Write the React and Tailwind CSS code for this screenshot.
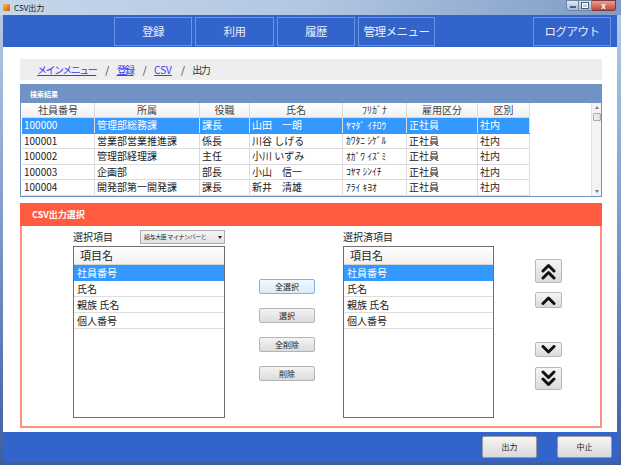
import React from "react";

const rows = [
  ["100000", "管理部総務課", "課長", "山田　一朗", "ﾔﾏﾀﾞ ｲﾁﾛｳ", "正社員", "社内"],
  ["100001", "営業部営業推進課", "係長", "川谷 しげる", "ｶﾜﾀﾆ ｼｹﾞﾙ", "正社員", "社内"],
  ["100002", "管理部経理課", "主任", "小川 いずみ", "ｵｶﾞﾜ ｲｽﾞﾐ", "正社員", "社内"],
  ["100003", "企画部", "部長", "小山　信一", "ｺﾔﾏ ｼﾝｲﾁ", "正社員", "社内"],
  ["100004", "開発部第一開発課", "課長", "新井　清雄", "ｱﾗｲ ｷﾖｵ", "正社員", "社内"],
];
const heads = ["社員番号", "所属", "役職", "氏名", "ﾌﾘｶﾞﾅ", "雇用区分", "区別"];

function NavBtn({ children, w }) {
  return (
    <div
      className={`${w} h-[29px] border border-[#6f93e4] flex items-center justify-center text-[11.5px] leading-none text-[#e8eefb] tracking-[-0.5px]`}
    >
      {children}
    </div>
  );
}

function GrayBtn({ children, focused }) {
  return (
    <div
      className={
        focused
          ? "w-[56px] h-[15px] rounded-[2px] border border-[#7eb4ea] bg-gradient-to-b from-[#f2f8fd] to-[#d9ebfa] flex items-center justify-center text-[8px] leading-none text-[#222]"
          : "w-[56px] h-[15px] rounded-[2px] border border-[#b4b4b4] bg-gradient-to-b from-[#f4f4f4] to-[#dcdcdc] flex items-center justify-center text-[8px] leading-none text-[#222]"
      }
    >
      {children}
    </div>
  );
}

function ListBox({ items }) {
  return (
    <div className="mt-[2px] h-[172px] border border-[#707070] bg-white flex flex-col">
      <div className="h-[18px] shrink-0 bg-gradient-to-b from-white to-[#f1f1f1] border-b border-[#d5d5d5] flex items-center pl-[6px] text-[11px] leading-none text-[#222]">
        項目名
      </div>
      {items.map((t, i) => (
        <div
          key={t}
          className={
            i === 0
              ? "h-[16px] shrink-0 bg-[#3399ff] text-white flex items-center pl-[3px] text-[10px] leading-none border-b border-[#3399ff]"
              : "h-[16px] shrink-0 text-[#222] flex items-center pl-[3px] text-[10px] leading-none border-b border-[#dedede]"
          }
        >
          {t}
        </div>
      ))}
    </div>
  );
}

function ArrowBtn({ h, mt, children }) {
  return (
    <div
      className={`${h} ${mt} w-[27px] rounded-[2px] border border-[#b9b9b9] bg-gradient-to-b from-[#f5f5f5] to-[#dadada] flex items-center justify-center`}
    >
      {children}
    </div>
  );
}

export default function App() {
  const items = ["社員番号", "氏名", "親族 氏名", "個人番号"];
  return (
    <div className="w-[621px] h-[465px] overflow-hidden flex flex-col bg-gradient-to-b from-[#b9cce6] via-[#7c99c7] to-[#3e5e9e] font-['Noto_Sans_CJK_JP','Noto_Sans',sans-serif]">
      {/* title bar */}
      <div className="h-[15px] shrink-0 flex items-center bg-gradient-to-r from-[#c6d6ea] via-[#b3c7e2] to-[#7f9bc6]">
        <div className="ml-[3px] w-[7px] h-[7px] bg-gradient-to-br from-[#f7c531] to-[#d4452a] rounded-[1px]" />
        <div className="ml-[4px] text-[8px] leading-none text-[#1a1a1a]">CSV出力</div>
        <div className="ml-auto mr-[5px] flex items-start self-start">
          <div className="w-[13px] h-[11px] border border-[#6f83a3] rounded-bl-[3px] bg-gradient-to-b from-[#dfe7f2] to-[#a9bad2] flex items-end justify-center pb-[2px]">
            <div className="w-[6px] h-[2px] bg-white border border-[#4a5d7c]" />
          </div>
          <div className="w-[13px] h-[11px] border-y border-r border-[#6f83a3] bg-gradient-to-b from-[#dfe7f2] to-[#a9bad2] flex items-center justify-center">
            <div className="w-[6px] h-[5px] border border-white outline outline-1 outline-[#4a5d7c]" />
          </div>
          <div className="w-[24px] h-[11px] border-y border-r border-[#7a3a3a] rounded-br-[3px] bg-gradient-to-b from-[#e8a093] to-[#c2453a] flex items-center justify-center text-[8px] leading-none text-white font-bold">
            x
          </div>
        </div>
      </div>

      <div className="flex-1 flex flex-col ml-[3px] mr-[4px] mb-[3px]">
        {/* header */}
        <div className="h-[32px] shrink-0 bg-[#3264cc] flex items-start pt-[2px] pl-[111px] gap-[3px]">
          <NavBtn w="w-[78px]">登録</NavBtn>
          <NavBtn w="w-[79px]">利用</NavBtn>
          <NavBtn w="w-[78px]">履歴</NavBtn>
          <NavBtn w="w-[77px]">管理メニュー</NavBtn>
          <div className="ml-auto mr-[6px]">
            <NavBtn w="w-[78px]">ログアウト</NavBtn>
          </div>
        </div>

        {/* main */}
        <div className="flex-1 bg-white flex flex-col pl-[17px] pr-[15px] pt-[12px] pb-[4px]">
          {/* breadcrumb */}
          <div className="h-[21px] shrink-0 bg-[#eeeeee] flex items-center pl-[17px] gap-[9px] text-[10px] leading-none tracking-[-1.5px]">
            <span className="text-[#3a3cf0] underline">メインメニュー</span>
            <span className="text-[#333]">/</span>
            <span className="text-[#3a3cf0] underline">登録</span>
            <span className="text-[#333]">/</span>
            <span className="text-[#3a3cf0] underline tracking-normal">CSV</span>
            <span className="text-[#333]">/</span>
            <span className="text-[#333]">出力</span>
          </div>

          {/* search results panel */}
          <div className="mt-[4px] h-[113px] shrink-0 border border-[#7092c4] flex flex-col">
            <div className="h-[18px] shrink-0 bg-[#7092c4] flex items-center pl-[9px] text-[7px] font-bold leading-none text-white">
              検索結果
            </div>
            <div className="flex-1 flex bg-white">
              <div className="ml-[1px] flex flex-col">
                <div className="grid grid-cols-[73px_105px_50px_93px_64px_71px_52px] h-[15px] bg-gradient-to-b from-white to-[#f0f0f0] border-b border-[#d8d8d8]">
                  {heads.map((h) => (
                    <div
                      key={h}
                      className="border-r border-[#dcdcdc] flex items-center justify-center text-[10px] leading-none text-[#444]"
                    >
                      {h}
                    </div>
                  ))}
                </div>
                {rows.map((r, i) => (
                  <div
                    key={r[0]}
                    className={
                      i === 0
                        ? "grid grid-cols-[73px_105px_50px_93px_64px_71px_52px] h-[15.5px] bg-[#3399ff] text-white border-b border-[#3399ff]"
                        : "grid grid-cols-[73px_105px_50px_93px_64px_71px_52px] h-[15.5px] text-[#222] border-b border-[#dcdcdc]"
                    }
                  >
                    {r.map((c, j) => (
                      <div
                        key={j}
                        className={
                          j === 4
                            ? "border-r border-[#dcdcdc] flex items-center pl-[3px] text-[9.5px] leading-none whitespace-nowrap overflow-hidden"
                            : "border-r border-[#dcdcdc] flex items-center pl-[2px] text-[10px] leading-none whitespace-nowrap overflow-hidden"
                        }
                      >
                        {c}
                      </div>
                    ))}
                  </div>
                ))}
              </div>
              <div className="flex-1" />
              <div className="w-[10px] bg-[#f3f3f3] border-l border-[#e2e2e2] flex flex-col items-center">
                <div className="h-[9px] flex items-center justify-center">
                  <div className="w-0 h-0 border-x-[2.5px] border-x-transparent border-b-[3px] border-b-[#7a7a7a]" />
                </div>
                <div className="mt-[1px] w-[8px] h-[8px] rounded-[1px] border border-[#a8a8a8] bg-gradient-to-r from-[#f4f4f4] to-[#dddddd]" />
                <div className="flex-1" />
                <div className="h-[9px] flex items-center justify-center">
                  <div className="w-0 h-0 border-x-[2.5px] border-x-transparent border-t-[3px] border-t-[#7a7a7a]" />
                </div>
              </div>
            </div>
          </div>

          {/* CSV output selection */}
          <div className="mt-[6px] flex-1 flex flex-col">
            <div className="h-[23px] shrink-0 bg-[#ff5b3f] flex items-center pl-[12px] text-[9px] font-bold leading-none text-white">
              CSV出力選択
            </div>
            <div className="flex-1 border-2 border-t-0 border-[#ff8f80] flex pl-[51px] pt-[4px]">
              {/* left list */}
              <div className="w-[152px] flex flex-col">
                <div className="h-[14px] flex items-center">
                  <span className="text-[10px] leading-none text-[#222]">選択項目</span>
                  <div className="ml-[27px] w-[85px] h-[14px] border border-[#adadad] bg-gradient-to-b from-[#f5f5f5] to-[#e2e2e2] flex items-center pl-[3px] pr-[2px] gap-[2px]">
                    <span className="text-[6px] leading-none tracking-[-0.4px] text-[#222] whitespace-nowrap">給与大臣 マイナンバーと</span>
                    <span className="ml-auto shrink-0 w-0 h-0 border-x-[2px] border-x-transparent border-t-[3px] border-t-[#222]" />
                  </div>
                </div>
                <ListBox items={items} />
              </div>

              {/* middle buttons */}
              <div className="ml-[34px] w-[56px] flex flex-col gap-[14px] pt-[49px]">
                <GrayBtn focused>全選択</GrayBtn>
                <GrayBtn>選択</GrayBtn>
                <GrayBtn>全削除</GrayBtn>
                <GrayBtn>削除</GrayBtn>
              </div>

              {/* right list */}
              <div className="ml-[28px] w-[151px] flex flex-col">
                <div className="h-[14px] flex items-center">
                  <span className="text-[10px] leading-none text-[#222]">選択済項目</span>
                </div>
                <ListBox items={items} />
              </div>

              {/* arrows */}
              <div className="ml-[41px] w-[27px] flex flex-col pt-[29px]">
                <ArrowBtn h="h-[24px]" mt="mt-0">
                  <svg width="15" height="17" viewBox="0 0 15 17" fill="none" stroke="#111" strokeWidth="3" strokeLinecap="round" strokeLinejoin="round">
                    <polyline points="2,8 7.5,2.5 13,8" />
                    <polyline points="2,15 7.5,9.5 13,15" />
                  </svg>
                </ArrowBtn>
                <ArrowBtn h="h-[16px]" mt="mt-[9px]">
                  <svg width="15" height="9" viewBox="0 0 15 9" fill="none" stroke="#111" strokeWidth="3" strokeLinecap="round" strokeLinejoin="round">
                    <polyline points="2,7.5 7.5,2 13,7.5" />
                  </svg>
                </ArrowBtn>
                <ArrowBtn h="h-[15px]" mt="mt-[34px]">
                  <svg width="15" height="9" viewBox="0 0 15 9" fill="none" stroke="#111" strokeWidth="3" strokeLinecap="round" strokeLinejoin="round">
                    <polyline points="2,1.5 7.5,7 13,1.5" />
                  </svg>
                </ArrowBtn>
                <ArrowBtn h="h-[23px]" mt="mt-[10px]">
                  <svg width="15" height="17" viewBox="0 0 15 17" fill="none" stroke="#111" strokeWidth="3" strokeLinecap="round" strokeLinejoin="round">
                    <polyline points="2,2 7.5,7.5 13,2" />
                    <polyline points="2,9 7.5,14.5 13,9" />
                  </svg>
                </ArrowBtn>
              </div>
            </div>
          </div>
        </div>

        {/* footer */}
        <div className="h-[30px] shrink-0 bg-[#3264cc] flex items-center justify-end pr-[5px] gap-[20px]">
          <div className="w-[55px] h-[22px] rounded-[2px] border border-[#9a9a9a] bg-gradient-to-b from-[#f6f6f6] to-[#d9d9d9] flex items-center justify-center text-[8px] leading-none text-[#222]">
            出力
          </div>
          <div className="w-[55px] h-[22px] rounded-[2px] border border-[#9a9a9a] bg-gradient-to-b from-[#f6f6f6] to-[#d9d9d9] flex items-center justify-center text-[8px] leading-none text-[#222]">
            中止
          </div>
        </div>
      </div>
    </div>
  );
}
